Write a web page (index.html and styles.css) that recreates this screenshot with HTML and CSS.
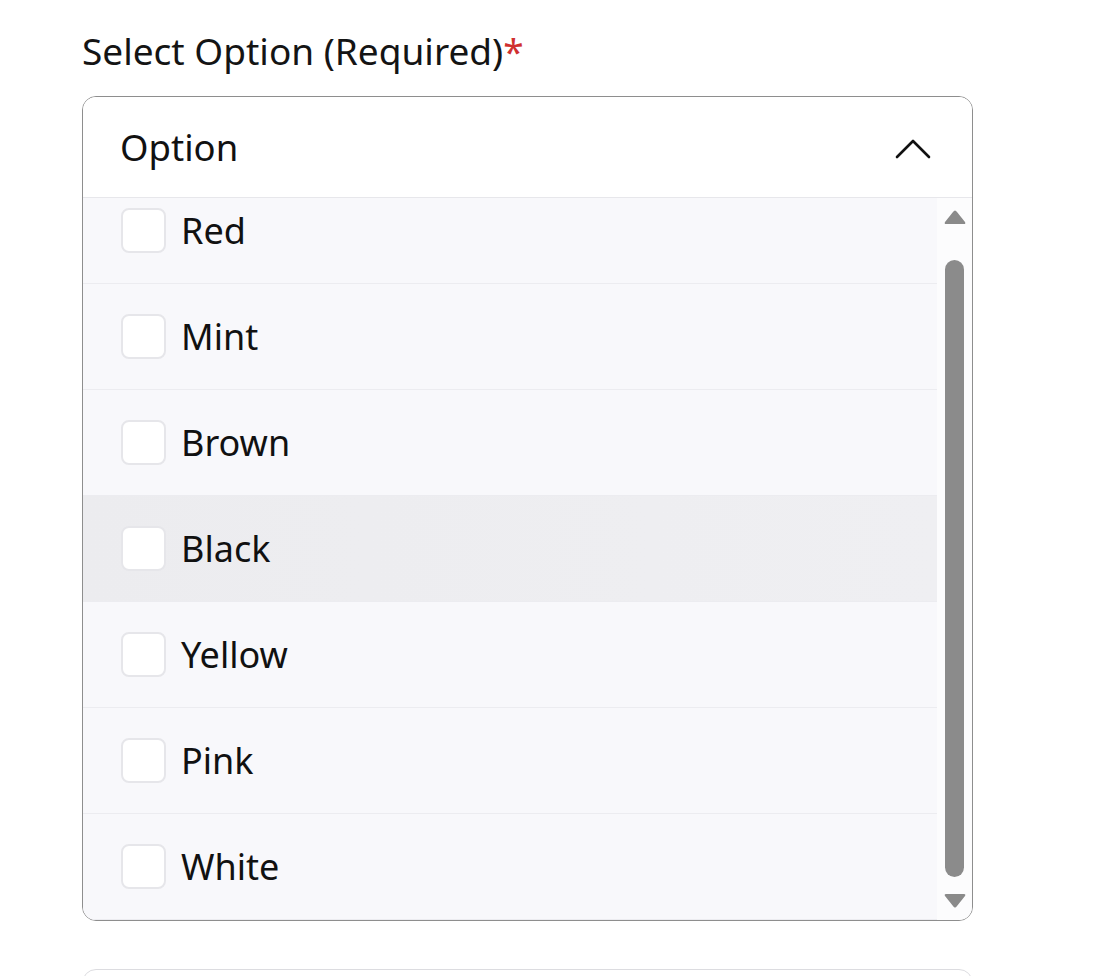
FILE: index.html
```html
<!DOCTYPE html>
<html>
<head>
<meta charset="utf-8">
<link rel="stylesheet" href="styles.css">
</head>
<body>
<div class="page">
  <div class="field">
    <div class="label">Select Option (Required)<span class="req">*</span></div>
    <div class="select">
      <div class="select-head">
        <span class="head-text">Option</span>
        <svg class="chev" width="36" height="22" viewBox="0 0 36 22"><path d="M2 20 L18 4 L34 20" fill="none" stroke="#111" stroke-width="2.6" stroke-linecap="round" stroke-linejoin="round"/></svg>
      </div>
      <div class="select-body">
        <div class="list">
          <div class="list-inner">
            <div class="row"><span class="box"></span><span class="row-text">Red</span></div>
            <div class="row"><span class="box"></span><span class="row-text">Mint</span></div>
            <div class="row"><span class="box"></span><span class="row-text">Brown</span></div>
            <div class="row hover"><span class="box"></span><span class="row-text">Black</span></div>
            <div class="row"><span class="box"></span><span class="row-text">Yellow</span></div>
            <div class="row"><span class="box"></span><span class="row-text">Pink</span></div>
            <div class="row"><span class="box"></span><span class="row-text">White</span></div>
          </div>
        </div>
        <div class="scrollbar">
          <svg class="arrow-up" width="24" height="16" viewBox="0 0 24 16"><path d="M12 1.5 Q13 1.5 14 3 L22 13 Q23 15 21 15 L3 15 Q1 15 2 13 L10 3 Q11 1.5 12 1.5Z" fill="#8a8a8a"/></svg>
          <div class="thumb"></div>
          <svg class="arrow-down" width="24" height="16" viewBox="0 0 24 16"><path d="M12 14.5 Q13 14.5 14 13 L22 3 Q23 1 21 1 L3 1 Q1 1 2 3 L10 13 Q11 14.5 12 14.5Z" fill="#8a8a8a"/></svg>
        </div>
      </div>
    </div>
    <div class="next-box"></div>
  </div>
</div>
</body>
</html>
```
FILE: styles.css
```css
html, body {
  margin: 0;
  padding: 0;
  background: #ffffff;
}
body {
  font-family: "Noto Sans", "Open Sans", sans-serif;
  color: #111;
  overflow: hidden;
  height: 976px;
}
.page {
  padding: 26px 0 0 82px;
  height: 950px;
  overflow: hidden;
}
.field {
  width: 891px;
}
.label {
  font-size: 37px;
  line-height: 50px;
  height: 50px;
  margin-bottom: 20px;
  color: #141414;
}
.req {
  color: #d0302f;
}
.select {
  border: 1.5px solid #8e8e8e;
  border-radius: 14px;
  overflow: hidden;
  background: #fff;
}
.select-head {
  height: 100px;
  display: flex;
  align-items: center;
  justify-content: space-between;
  padding: 0 41px 0 37px;
  background: #fff;
}
.head-text {
  font-size: 36.5px;
}
.chev {
  display: block;
  margin-top: 2px;
}
.select-body {
  display: flex;
  height: 722px;
  border-top: 1px solid #e7e7eb;
}
.list {
  flex: 1;
  overflow: hidden;
  background: #f8f8fb;
}
.list-inner {
  margin-top: -20px;
}
.row {
  height: 105px;
  border-bottom: 1px solid #ececf0;
  display: flex;
  align-items: center;
  padding-left: 38px;
  gap: 15px;
}
.row.hover {
  background: linear-gradient(90deg, #ececef 0%, #efeff2 100%);
}
.box {
  width: 41px;
  height: 41px;
  border: 2px solid #e6e6ea;
  border-radius: 8px;
  background: #fff;
  flex: none;
}
.row-text {
  font-size: 36px;
}
.scrollbar {
  width: 35px;
  flex: none;
  background: #fcfcfd;
  display: flex;
  flex-direction: column;
  align-items: center;
  padding-top: 11px;
  box-sizing: border-box;
}
.arrow-up, .arrow-down {
  display: block;
}
.thumb {
  width: 19px;
  height: 617px;
  margin-top: 35px;
  border-radius: 10px;
  background: #8b8b8b;
}
.arrow-down {
  margin-top: 16px;
}
.next-box {
  margin-top: 48px;
  height: 60px;
  border: 1.5px solid #dcdce0;
  border-radius: 14px;
}
```
